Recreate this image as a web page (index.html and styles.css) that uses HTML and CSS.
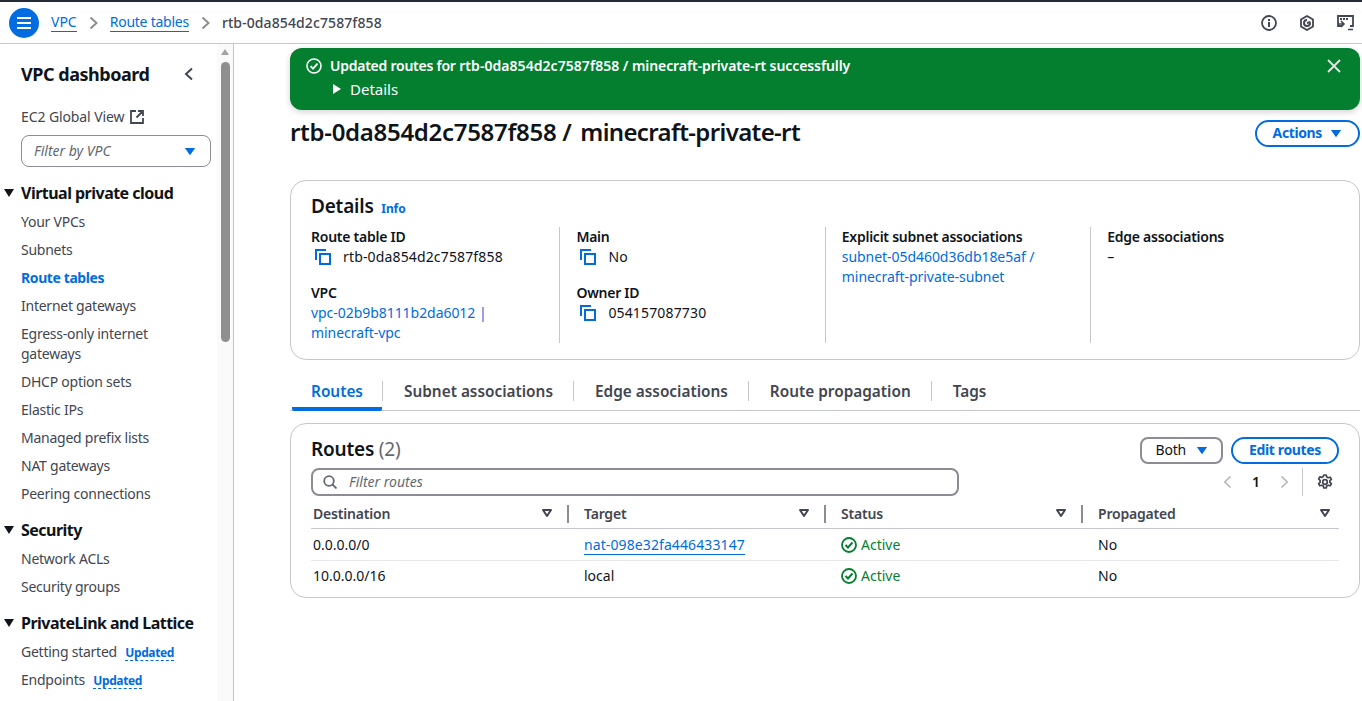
FILE: index.html
```html
<!DOCTYPE html>
<html lang="en">
<head>
<meta charset="utf-8">
<title>Route table</title>
<link rel="stylesheet" href="styles.css">
</head>
<body>
<svg class="defs" width="0" height="0" aria-hidden="true">
  <defs>
    <symbol id="copy" viewBox="0 0 16 16"><path d="M1 11V1h10" fill="none" stroke="currentColor" stroke-width="2"/><rect x="5" y="5" width="10" height="10" fill="none" stroke="currentColor" stroke-width="2"/></symbol>
    <symbol id="active" viewBox="0 0 16 16"><circle cx="8" cy="8" r="7" fill="none" stroke="currentColor" stroke-width="1.800"/><path d="M4.500 8l2.500 2.500 4.500-5" fill="none" stroke="currentColor" stroke-width="2"/></symbol>
    <symbol id="sort" viewBox="0 0 12 10"><path d="M2 2h8L6 8z" fill="none" stroke="currentColor" stroke-width="2" stroke-linejoin="round"/></symbol>
    <symbol id="caret" viewBox="0 0 14 10"><path d="M1 1h12L7 9.500z" fill="currentColor"/></symbol>
  </defs>
</svg>
<header class="topbar">
  <div class="menu-btn"><svg width="16" height="14" viewBox="0 0 16 14"><path d="M1 2h14M1 7h14M1 12h14" stroke="#fff" stroke-width="2"/></svg></div>
  <nav class="crumbs">
    <a class="crumb-link">VPC</a>
    <svg class="crumb-sep" width="9" height="14" viewBox="0 0 9 14"><path d="M1.500 1.500L7.500 7l-6 5.500" fill="none" stroke="#8c8c94" stroke-width="2"/></svg>
    <a class="crumb-link narrow">Route tables</a>
    <svg class="crumb-sep" width="9" height="14" viewBox="0 0 9 14"><path d="M1.500 1.500L7.500 7l-6 5.500" fill="none" stroke="#8c8c94" stroke-width="2"/></svg>
    <span class="crumb-current">rtb-0da854d2c7587f858</span>
  </nav>
  <div class="top-icons">
    <svg width="16" height="16" viewBox="0 0 16 16"><circle cx="8" cy="8" r="7" fill="none" stroke="#424650" stroke-width="1.800"/><path d="M8 7v5M8 4v2" stroke="#424650" stroke-width="2"/></svg>
    <svg width="16" height="16" viewBox="0 0 16 16"><path d="M8 1l6 3.500v7L8 15l-6-3.500v-7z" fill="none" stroke="#424650" stroke-width="1.800"/><path d="M11 8a3 3 0 1 1-3-3" fill="none" stroke="#424650" stroke-width="2"/><path d="M8 8l3.500-1" stroke="#424650" stroke-width="2"/></svg>
    <svg width="17" height="16" viewBox="0 0 17 16"><path d="M5 11H1V1h15v10h-3" fill="none" stroke="#424650" stroke-width="1.800"/><path d="M3 4h9" stroke="#424650" stroke-width="2" stroke-dasharray="2 1"/><path d="M4 6l3 3-3 3m-3-3h6M11 14.500h5" fill="none" stroke="#424650" stroke-width="1.600"/></svg>
  </div>
</header>
<div class="shell">
  <aside class="sidebar">
    <div class="side-head"><span class="side-title">VPC dashboard</span>
      <svg class="side-close" width="10" height="14" viewBox="0 0 10 14"><path d="M8 1.500L2 7l6 5.500" fill="none" stroke="#424650" stroke-width="2"/></svg>
    </div>
    <div class="side-global">EC2 Global View
      <svg width="14" height="14" viewBox="0 0 14 14"><path d="M6 1H1v12h12V8M8 1h5v5M13 1L6.500 7.500" fill="none" stroke="#424650" stroke-width="1.800"/></svg>
    </div>
    <div class="vpc-filter"><i>Filter by VPC</i><svg class="caret-blue" width="12" height="9"><use href="#caret"/></svg></div>
    <h3 class="side-section first">Virtual private cloud</h3>
    <ul class="side-list">
      <li>Your VPCs</li>
      <li>Subnets</li>
      <li class="on">Route tables</li>
      <li>Internet gateways</li>
      <li>Egress-only internet gateways</li>
      <li>DHCP option sets</li>
      <li>Elastic IPs</li>
      <li>Managed prefix lists</li>
      <li>NAT gateways</li>
      <li>Peering connections</li>
    </ul>
    <h3 class="side-section">Security</h3>
    <ul class="side-list">
      <li>Network ACLs</li>
      <li>Security groups</li>
    </ul>
    <h3 class="side-section">PrivateLink and Lattice</h3>
    <ul class="side-list">
      <li>Getting started <span class="upd">Updated</span></li>
      <li>Endpoints <span class="upd">Updated</span></li>
    </ul>
    <div class="scrollbar"><span class="sb-up"></span><span class="sb-thumb"></span></div>
  </aside>
  <main class="content">
    <div class="flash">
      <div class="flash-line">
        <svg width="16" height="16" viewBox="0 0 16 16"><circle cx="8" cy="8" r="7" fill="none" stroke="#fff" stroke-width="1.600"/><path d="M4.500 8.200l2.500 2.500 4.500-5" fill="none" stroke="#fff" stroke-width="1.800"/></svg>
        <strong><span class="flash-lead">Updated routes for</span> <span class="flash-id">rtb-0da854d2c7587f858</span> / minecraft-private-rt successfully</strong>
      </div>
      <div class="flash-details"><span class="tri"></span>Details</div>
      <svg class="flash-x" width="14" height="14" viewBox="0 0 14 14"><path d="M1 1l12 12M13 1L1 13" stroke="#e6e6e6" stroke-width="1.800"/></svg>
    </div>
    <div class="page-head">
      <h1><span class="title-id">rtb-0da854d2c7587f858</span> / <span class="title-name">minecraft-private-rt</span></h1>
      <button class="btn">Actions <svg width="12" height="9"><use href="#caret"/></svg></button>
    </div>
    <section class="card details">
      <h2>Details <a class="info">Info</a></h2>
      <div class="kv-grid">
        <div class="kv-col">
          <div class="kv"><b>Route table ID</b><span class="copyrow"><svg class="copy"><use href="#copy"/></svg>rtb-0da854d2c7587f858</span></div>
          <div class="kv"><b>VPC</b><span class="lnk">vpc-02b9b8111b2da6012 | minecraft-vpc</span></div>
        </div>
        <div class="kv-col">
          <div class="kv"><b>Main</b><span class="copyrow"><svg class="copy"><use href="#copy"/></svg>No</span></div>
          <div class="kv"><b>Owner ID</b><span class="copyrow"><svg class="copy"><use href="#copy"/></svg>054157087730</span></div>
        </div>
        <div class="kv-col">
          <div class="kv"><b>Explicit subnet associations</b><span class="lnk">subnet-05d460d36db18e5af / minecraft-private-subnet</span></div>
        </div>
        <div class="kv-col">
          <div class="kv"><b>Edge associations</b><span>–</span></div>
        </div>
      </div>
    </section>
    <div class="tabs">
      <span class="tab on">Routes</span>
      <span class="tab">Subnet associations</span>
      <span class="tab">Edge associations</span>
      <span class="tab">Route propagation</span>
      <span class="tab">Tags</span>
    </div>
    <section class="card routes">
      <div class="routes-head">
        <h2>Routes <em>(2)</em></h2>
        <div class="routes-actions">
          <button class="select">Both <svg width="12" height="9"><use href="#caret"/></svg></button>
          <button class="btn">Edit routes</button>
        </div>
      </div>
      <div class="filter-row">
        <div class="route-filter">
          <svg width="14" height="14" viewBox="0 0 14 14"><circle cx="6" cy="6" r="4.800" fill="none" stroke="#656871" stroke-width="1.800"/><path d="M9.500 9.500L13.500 13.500" stroke="#656871" stroke-width="1.800"/></svg>
          <i>Filter routes</i>
        </div>
        <div class="pager">
          <svg width="9" height="14" viewBox="0 0 9 14"><path d="M7.500 1.500L1.800 7l5.700 5.500" fill="none" stroke="#b4b4bb" stroke-width="1.600"/></svg>
          <b>1</b>
          <svg width="9" height="14" viewBox="0 0 9 14"><path d="M1.500 1.500L7.200 7l-5.700 5.500" fill="none" stroke="#b4b4bb" stroke-width="1.600"/></svg>
          <span class="pager-sep"></span>
          <svg width="16" height="16" viewBox="0 0 16 16"><path d="M6.800 1h2.400l.5 2 1.500.8 2-.6 1.200 2.100-1.500 1.400v1.600l1.500 1.400-1.200 2.100-2-.6-1.500.8-.5 2H6.800l-.5-2-1.500-.8-2 .6-1.200-2.100 1.500-1.400V6.300L1.600 4.900l1.200-2.100 2 .6 1.500-.8z" fill="none" stroke="#424650" stroke-width="1.700" stroke-linejoin="round"/><circle cx="8" cy="8" r="2.300" fill="none" stroke="#424650" stroke-width="1.700"/></svg>
        </div>
      </div>
      <table class="rt">
        <thead>
          <tr>
            <th>Destination<svg class="sort"><use href="#sort"/></svg></th>
            <th>Target<svg class="sort"><use href="#sort"/></svg></th>
            <th>Status<svg class="sort"><use href="#sort"/></svg></th>
            <th>Propagated<svg class="sort"><use href="#sort"/></svg></th>
          </tr>
        </thead>
        <tbody>
          <tr>
            <td>0.0.0.0/0</td>
            <td><a class="tlink">nat-098e32fa446433147</a></td>
            <td class="ok"><svg width="16" height="16"><use href="#active"/></svg>Active</td>
            <td>No</td>
          </tr>
          <tr>
            <td>10.0.0.0/16</td>
            <td>local</td>
            <td class="ok"><svg width="16" height="16"><use href="#active"/></svg>Active</td>
            <td>No</td>
          </tr>
        </tbody>
      </table>
    </section>
  </main>
</div>
</body>
</html>
```
FILE: styles.css
```css
* { box-sizing: border-box; }
html, body { margin: 0; padding: 0; height: 701px; overflow: hidden; background: #fff; }
body { font-family: "Noto Sans", "Open Sans", sans-serif; font-size: 14px; line-height: 20px; color: #0f141a; border-top: 2px solid #232b37; }
.defs { position: absolute; }
h1, h2, h3, ul { margin: 0; padding: 0; }
button { font: inherit; background: #fff; cursor: pointer; }

.topbar { height: 42px; border-bottom: 1px solid #c6c6cd; display: flex; align-items: center; padding: 0 8px 0 9px; }
.menu-btn { width: 30px; height: 30px; border-radius: 50%; background: #006ce0; display: flex; align-items: center; justify-content: center; }
.crumbs { display: flex; align-items: center; margin-left: 12px; gap: 12px; flex: 1; }
.crumb-link { color: #006ce0; border-bottom: 1px solid #006ce0; line-height: 18px; }
.crumb-link.narrow { letter-spacing: -.25px; }
.crumb-current { color: #424650; font-weight: 500; letter-spacing: .1px; }
.top-icons { display: flex; gap: 22px; align-items: center; }

.shell { display: flex; height: 657px; }
.sidebar { width: 234px; flex: none; border-right: 1px solid #c6c6cd; padding: 19px 0 0 21px; position: relative; overflow: hidden; }
.side-head { display: flex; align-items: center; width: 173px; justify-content: space-between; height: 22px; }
.side-title { font-size: 18px; font-weight: 700; line-height: 22px; letter-spacing: -.46px; }
.side-global { margin-top: 22px; color: #424650; display: flex; align-items: center; gap: 6px; height: 20px; letter-spacing: -.1px; }
.vpc-filter { margin-top: 8px; width: 190px; height: 32px; border: 1px solid #8c8c94; border-radius: 8px; padding: 0 14px 0 12px; display: flex; align-items: center; justify-content: space-between; color: #656871; }
.caret-blue { color: #006ce0; }
.side-section { font-size: 16px; line-height: 20px; font-weight: 700; margin-top: 12px; position: relative; letter-spacing: -.52px; }
.side-section.first { margin-top: 16px; }
.side-section::before { content: ""; position: absolute; left: -17px; top: 6px; border-left: 5px solid transparent; border-right: 5px solid transparent; border-top: 8px solid #0f141a; }
.side-list { list-style: none; margin-top: 5px; width: 180px; }
.side-list li { padding: 4px 0; color: #424650; line-height: 20px; letter-spacing: -.25px; }
.side-list li.on { color: #006ce0; font-weight: 700; letter-spacing: -.4px; }
.upd { font-size: 12px; font-weight: 700; color: #006ce0; border-bottom: 1px dashed #006ce0; margin-left: 5px; line-height: 14px; display: inline-block; letter-spacing: -.4px; }
.scrollbar { position: absolute; top: 0; right: 0; bottom: 0; width: 16px; background: #fafafa; }
.sb-up { position: absolute; left: 4px; top: 5px; border-left: 4.500px solid transparent; border-right: 4.500px solid transparent; border-bottom: 6px solid #a3a3a3; }
.sb-thumb { position: absolute; left: 4px; top: 18px; width: 9px; height: 280px; background: #8f8f8f; border-radius: 5px; }

.content { flex: 1; padding: 4px 2px 0 56px; min-width: 0; }
.flash { background: #037f2f; color: #fff; border-radius: 12px; height: 62px; padding: 8px 18px 0 16px; position: relative; box-shadow: 0 2px 6px rgba(0,0,0,.18); }
.flash-line { display: flex; align-items: center; gap: 8px; height: 20px; }
.flash-line strong { font-weight: 600; letter-spacing: -.08px; }
.flash-lead { letter-spacing: -.25px; }
.flash-id { letter-spacing: .05px; }
.flash-details { display: flex; align-items: center; margin: 1px 0 0 26px; height: 23px; font-size: 15px; }
.tri { width: 0; height: 0; border-top: 5px solid transparent; border-bottom: 5px solid transparent; border-left: 8px solid #fff; margin: 0 9px 0 1px; }
.flash-x { position: absolute; right: 19px; top: 11px; }
.page-head { display: flex; justify-content: space-between; align-items: center; margin-top: 8px; height: 28px; }
.page-head h1 { font-size: 24px; line-height: 28px; font-weight: 600; letter-spacing: -.39px; }
.title-id { letter-spacing: -.3px; }
.title-name { letter-spacing: -.64px; margin-left: 3px; }
.page-head .btn { margin-top: 2px; }
.btn { height: 27px; border: 2px solid #006ce0; border-radius: 16px; color: #006ce0; font-weight: 700; padding: 0 16px; display: inline-flex; align-items: center; gap: 8px; letter-spacing: -.38px; }
.card { border: 1px solid #c6c6cd; border-radius: 16px; background: #fff; }
.details { margin-top: 34px; height: 180px; padding: 13px 20px 0; }
h2 { font-size: 19px; line-height: 24px; height: 24px; font-weight: 600; letter-spacing: -.2px; }
.info { font-size: 12px; font-weight: 700; color: #006ce0; margin-left: 3px; letter-spacing: -.1px; }
.kv-grid { display: grid; grid-template-columns: repeat(4, 265.400px); grid-template-rows: 116px; margin-top: 9px; height: 116px; }
.kv-col { border-right: 1px solid #c6c6cd; padding-right: 16px; margin-right: 16px; }
.kv-col:last-child { border-right: 0; }
.kv { margin-bottom: 16px; }
.kv b { display: block; font-weight: 600; color: #0f141a; letter-spacing: -.25px; }
.kv span { display: block; }
.kv span.copyrow { display: flex; align-items: center; gap: 12px; padding-left: 4px; color: #0f141a; letter-spacing: .15px; }
.copy { width: 16px; height: 16px; color: #006ce0; flex: none; }
.lnk { color: #006ce0; letter-spacing: -.05px; }
.tabs { display: flex; margin-top: 20px; height: 31px; border-bottom: 1px solid #c6c6cd; padding-left: 2px; }
.tab { font-size: 15.360px; font-weight: 600; color: #424650; padding: 1px 20px 0 21px; height: 20px; margin-top: 1px; line-height: 20px; border-left: 1px solid #c6c6cd; }
.tab.on { border-left: 0; width: 90px; color: #006ce0; height: 31px; margin-top: 0; border-bottom: 4px solid #006ce0; padding: 2px 0 0 19px; border-radius: 2px; }
.routes { margin-top: 12px; height: 175px; padding: 13px 20px 0; position: relative; }
.routes-head { display: flex; justify-content: space-between; height: 26px; }
.routes-head em { font-style: normal; font-weight: 400; color: #656871; }
.routes-actions { display: flex; gap: 8px; align-items: flex-start; }
.routes-actions .btn { padding: 0 16px 1px; letter-spacing: -.35px; }
.select { height: 27px; border: 2px solid #8c8c94; border-radius: 8px; color: #0f141a; padding: 0 13px 1px 13px; display: inline-flex; align-items: center; gap: 10px; letter-spacing: -.2px; }
.select svg { color: #006ce0; }
.filter-row { display: flex; justify-content: space-between; margin-top: 6px; height: 26px; align-items: center; }
.route-filter { width: 648px; height: 28px; border: 2px solid #8c8c94; border-radius: 8px; display: flex; align-items: center; gap: 12px; padding: 0 10px; color: #656871; }
.pager { display: flex; align-items: center; width: 116px; }
.pager b { width: 48px; text-align: center; font-weight: 600; }
.pager-sep { width: 1px; height: 28px; background: #c6c6cd; margin: 0 14px 0 13px; }
.rt { border-collapse: collapse; width: 1028px; table-layout: fixed; margin-top: 4px; }
.rt th { text-align: left; font-weight: 600; color: #424650; padding: 1px 0 0 2px; height: 29px; border-bottom: 1px solid #c6c6cd; position: relative; letter-spacing: -.2px; }
.rt th:first-child { width: 271px; }
.rt th:nth-child(2), .rt th:nth-child(3) { width: 257px; }
.rt th + th::before { content: ""; position: absolute; left: -15px; top: 6px; width: 2px; height: 18px; background: #8c8c94; }
.sort { position: absolute; right: 29px; top: 9px; width: 12px; height: 10px; color: #424650; }
.rt th:last-child .sort { right: 8px; }
.rt td { padding: 1px 0 0 2px; height: 32px; border-bottom: 1px solid #e8e8ec; }
.rt tr:last-child td { border-bottom: 0; height: 30px; }
.tlink { color: #006ce0; border-bottom: 1px solid #006ce0; letter-spacing: .1px; }
.ok { color: #037f2f; }
.ok svg { vertical-align: -3px; margin-right: 4px; }
```
